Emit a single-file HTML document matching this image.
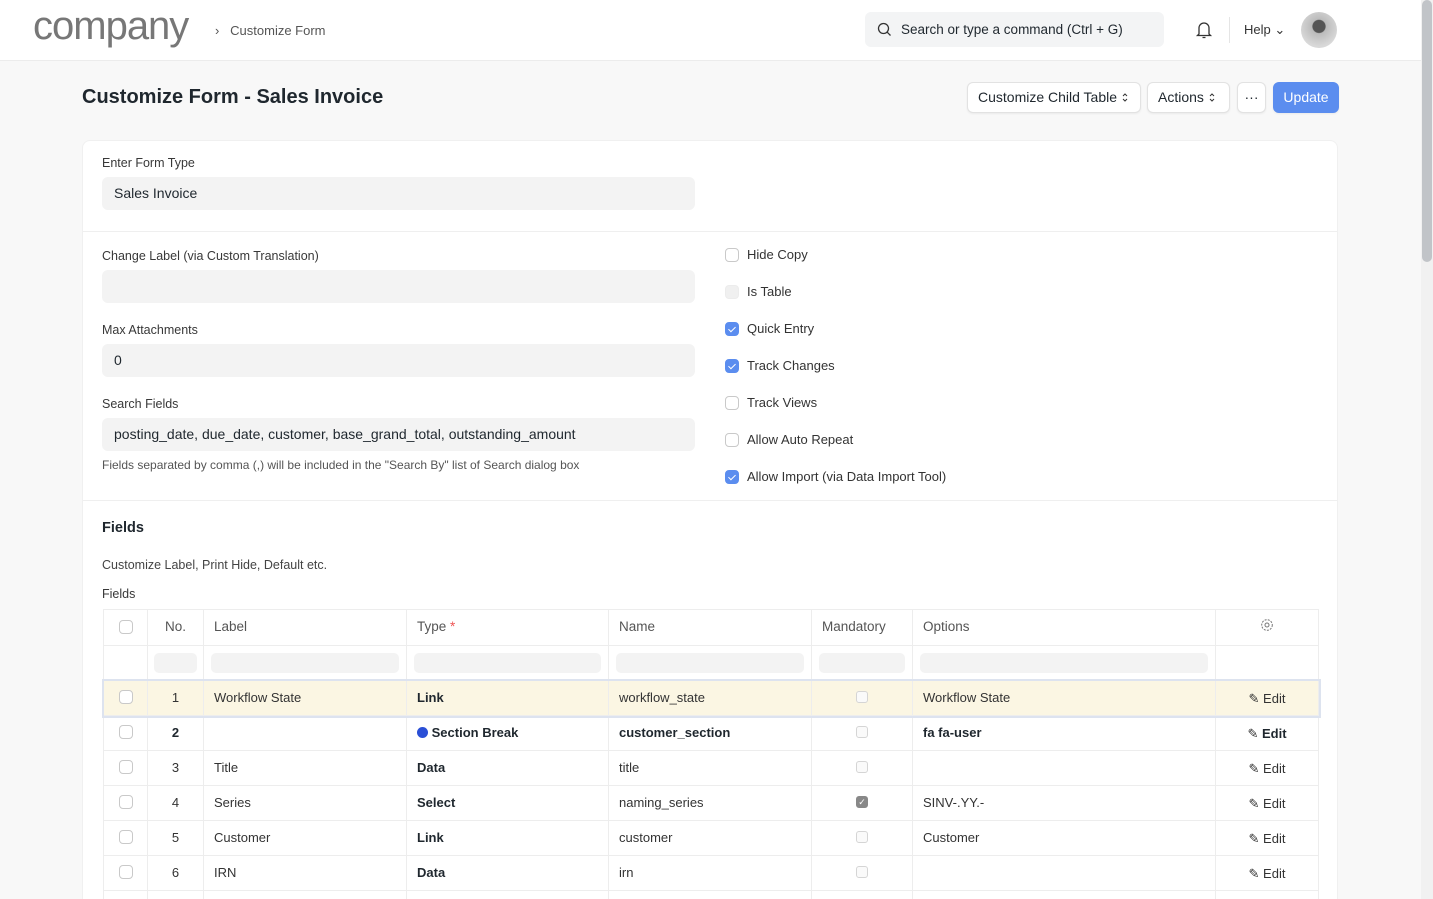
<!DOCTYPE html>
<html><head><meta charset="utf-8">
<style>
*{box-sizing:border-box;margin:0;padding:0}
html,body{width:1433px;height:899px;overflow:hidden}
body{background:#f8f8f8;font-family:"Liberation Sans",sans-serif;color:#1f272e;position:relative;font-size:13px}
.wrap{position:absolute;left:0;top:0;width:1433px;height:899px;overflow:hidden}
.a{position:absolute}
.nav{left:0;top:0;width:1421px;height:61px;background:#fff;border-bottom:1px solid #ececec}
.inp{background:#f3f3f3;border-radius:6px;height:33px;font-size:14px;padding:0 12px;line-height:33px;color:#1f272e}
.lbl{font-size:12.5px;color:#383838}
.btn{background:#fff;border:1px solid #e2e2e2;border-radius:6px;height:31px;line-height:29px;font-size:14px;padding:0 10px;color:#1f272e;box-shadow:0 1px 2px rgba(0,0,0,.06);white-space:nowrap}
.cb{width:14px;height:14px;border:1px solid #c9c9c9;border-radius:4px;background:#fff}
.cb.on{background:#5b8def;border-color:#5b8def}
.cb.on:after{content:"";position:absolute;left:4px;top:1.5px;width:3px;height:6px;border:solid #fff;border-width:0 1.6px 1.6px 0;transform:rotate(45deg)}
.ck{font-size:13px;color:#333}
table{border-collapse:collapse;table-layout:fixed;font-size:13px}
td{border:1px solid #ededed;height:35px;padding:0 10px 2px;white-space:nowrap;overflow:hidden;color:#333}
th{border:1px solid #ededed;height:36px;padding:0 10px 2px;font-weight:normal;text-align:left;color:#555;font-size:13.5px}
.f{height:20px;background:#f3f3f3;border-radius:5px}
b{font-weight:bold;color:#1f272e}
.sc{width:12px;height:12px;border:1px solid #d5d5d5;border-radius:3px;background:#fafafa;margin:auto}
.edit{font-size:13px;color:#333;text-align:center;padding-top:4px}
.ud{display:inline-block;vertical-align:-1px;margin-left:4px}
</style></head><body><div class="wrap">
<div class="a nav"></div>
<div class="a" style="left:33px;top:4px;font-size:40px;color:#777;letter-spacing:-1px">company</div>
<div class="a" style="left:215px;top:23px;font-size:13px;color:#555">›&nbsp;&nbsp; Customize Form</div>
<div class="a inp" style="left:865px;top:12px;width:299px;height:35px;line-height:35px;background:#f3f4f5;font-size:13.5px;padding-left:36px">Search or type a command (Ctrl + G)</div>
<svg class="a" style="left:877px;top:22px" width="15" height="15" viewBox="0 0 15 15"><circle cx="6.5" cy="6.5" r="5" fill="none" stroke="#333" stroke-width="1.3"/><path d="M10.2 10.2L13.5 13.5" stroke="#333" stroke-width="1.3"/></svg>
<svg class="a" style="left:1195px;top:20px" width="18" height="20" viewBox="0 0 18 20"><path d="M4 14V8a5 5 0 0110 0v6l1.5 1.5h-13z M7.5 17.5h3" fill="none" stroke="#333" stroke-width="1.3"/></svg>
<div class="a" style="left:1229px;top:17px;width:1px;height:26px;background:#e5e5e5"></div>
<div class="a" style="left:1244px;top:22px;font-size:13px;color:#333">Help ⌄</div>
<div class="a" style="left:1301px;top:12px;width:36px;height:36px;border-radius:50%;background:radial-gradient(circle at 50% 40%,#555 0 22%,#bbb 25%,#d8d8d8 70%)"></div>
<div class="a" style="left:1421px;top:0;width:12px;height:899px;background:#f1f1f1"></div>
<div class="a" style="left:1422px;top:0;width:10px;height:262px;background:#c1c4c8;border-radius:5px"></div>

<div class="a" style="left:82px;top:86px;font-size:20px;font-weight:bold;color:#1f272e">Customize Form - Sales Invoice</div>
<div class="a btn" style="left:967px;top:82px;width:174px">Customize Child Table<svg class="ud" width="8" height="11" viewBox="0 0 8 11"><path d="M2 4L4 2L6 4M2 7L4 9L6 7" fill="none" stroke="#333"/></svg></div>
<div class="a btn" style="left:1147px;top:82px;width:83px">Actions<svg class="ud" width="8" height="11" viewBox="0 0 8 11"><path d="M2 4L4 2L6 4M2 7L4 9L6 7" fill="none" stroke="#333"/></svg></div>
<div class="a btn" style="left:1237px;top:82px;width:29px;padding:0;text-align:center">···</div>
<div class="a btn" style="left:1273px;top:82px;width:66px;background:#5b8def;border-color:#5b8def;color:#fff;text-align:center;padding:0">Update</div>

<div class="a" style="left:82px;top:140px;width:1256px;height:780px;background:#fff;border-radius:8px;border:1px solid #f0f0f0"></div>
<div class="a lbl" style="left:102px;top:156px">Enter Form Type</div>
<div class="a inp" style="left:102px;top:177px;width:593px">Sales Invoice</div>
<div class="a" style="left:83px;top:231px;width:1254px;height:1px;background:#efefef"></div>
<div class="a lbl" style="left:102px;top:249px">Change Label (via Custom Translation)</div>
<div class="a inp" style="left:102px;top:270px;width:593px"></div>
<div class="a lbl" style="left:102px;top:323px">Max Attachments</div>
<div class="a inp" style="left:102px;top:344px;width:593px">0</div>
<div class="a lbl" style="left:102px;top:397px">Search Fields</div>
<div class="a inp" style="left:102px;top:418px;width:593px">posting_date, due_date, customer, base_grand_total, outstanding_amount</div>
<div class="a" style="left:102px;top:458px;font-size:12px;color:#555">Fields separated by comma (,) will be included in the "Search By" list of Search dialog box</div>

<div class="a cb" style="left:725px;top:248px"></div><div class="a ck" style="left:747px;top:247px">Hide Copy</div>
<div class="a cb" style="left:725px;top:285px;background:#f0f0f0;border-color:#ececec"></div><div class="a ck" style="left:747px;top:284px">Is Table</div>
<div class="a cb on" style="left:725px;top:322px"></div><div class="a ck" style="left:747px;top:321px">Quick Entry</div>
<div class="a cb on" style="left:725px;top:359px"></div><div class="a ck" style="left:747px;top:358px">Track Changes</div>
<div class="a cb" style="left:725px;top:396px"></div><div class="a ck" style="left:747px;top:395px">Track Views</div>
<div class="a cb" style="left:725px;top:433px"></div><div class="a ck" style="left:747px;top:432px">Allow Auto Repeat</div>
<div class="a cb on" style="left:725px;top:470px"></div><div class="a ck" style="left:747px;top:469px">Allow Import (via Data Import Tool)</div>

<div class="a" style="left:83px;top:500px;width:1254px;height:1px;background:#efefef"></div>
<div class="a" style="left:102px;top:520px;font-size:14.5px;font-weight:bold">Fields</div>
<div class="a" style="left:102px;top:558px;font-size:12.5px;color:#444">Customize Label, Print Hide, Default etc.</div>
<div class="a lbl" style="left:102px;top:587px">Fields</div>

<table class="a" style="left:103px;top:609px;width:1215px">
<colgroup><col style="width:44px"><col style="width:56px"><col style="width:203px"><col style="width:202px"><col style="width:203px"><col style="width:101px"><col style="width:303px"><col style="width:103px"></colgroup>
<tr style="height:35px"><th style="height:35px"><div class="cb" style="position:relative;margin:auto"></div></th><th style="text-align:center">No.</th><th>Label</th><th>Type <span style="color:#e55">*</span></th><th>Name</th><th>Mandatory</th><th>Options</th><th style="text-align:center"><svg width="14" height="14" viewBox="0 0 14 14"><circle cx="7" cy="7" r="2" fill="none" stroke="#777"/><circle cx="7" cy="7" r="5.3" fill="none" stroke="#777" stroke-dasharray="2 1.2"/></svg></th></tr>
<tr><td style="height:34px"></td><td style="padding:0 6px"><div class="f"></div></td><td style="padding:0 7px"><div class="f"></div></td><td style="padding:0 7px"><div class="f"></div></td><td style="padding:0 7px"><div class="f"></div></td><td style="padding:0 7px"><div class="f"></div></td><td style="padding:0 7px"><div class="f"></div></td><td></td></tr>
<tr style="background:#fbf6e3;outline:2px solid #dde3ef"><td><div class="cb" style="position:relative;margin:auto"></div></td><td style="text-align:center">1</td><td>Workflow State</td><td><b>Link</b></td><td>workflow_state</td><td><div class="sc"></div></td><td>Workflow State</td><td class="edit">✎ Edit</td></tr>
<tr><td><div class="cb" style="position:relative;margin:auto"></div></td><td style="text-align:center"><b>2</b></td><td></td><td><span style="display:inline-block;width:11px;height:11px;border-radius:50%;background:#2a4fd6;vertical-align:-1px"></span> <b>Section Break</b></td><td><b>customer_section</b></td><td><div class="sc"></div></td><td><b>fa fa-user</b></td><td class="edit">✎ <b>Edit</b></td></tr>
<tr><td><div class="cb" style="position:relative;margin:auto"></div></td><td style="text-align:center">3</td><td>Title</td><td><b>Data</b></td><td>title</td><td><div class="sc"></div></td><td></td><td class="edit">✎ Edit</td></tr>
<tr><td><div class="cb" style="position:relative;margin:auto"></div></td><td style="text-align:center">4</td><td>Series</td><td><b>Select</b></td><td>naming_series</td><td><div class="sc" style="background:#888;border-color:#888;color:#fff;font-size:9px;text-align:center;line-height:10px">✓</div></td><td>SINV-.YY.-</td><td class="edit">✎ Edit</td></tr>
<tr><td><div class="cb" style="position:relative;margin:auto"></div></td><td style="text-align:center">5</td><td>Customer</td><td><b>Link</b></td><td>customer</td><td><div class="sc"></div></td><td>Customer</td><td class="edit">✎ Edit</td></tr>
<tr><td><div class="cb" style="position:relative;margin:auto"></div></td><td style="text-align:center">6</td><td>IRN</td><td><b>Data</b></td><td>irn</td><td><div class="sc"></div></td><td></td><td class="edit">✎ Edit</td></tr>
<tr><td></td><td></td><td></td><td></td><td></td><td></td><td></td><td></td></tr>
</table>
</div></body></html>
